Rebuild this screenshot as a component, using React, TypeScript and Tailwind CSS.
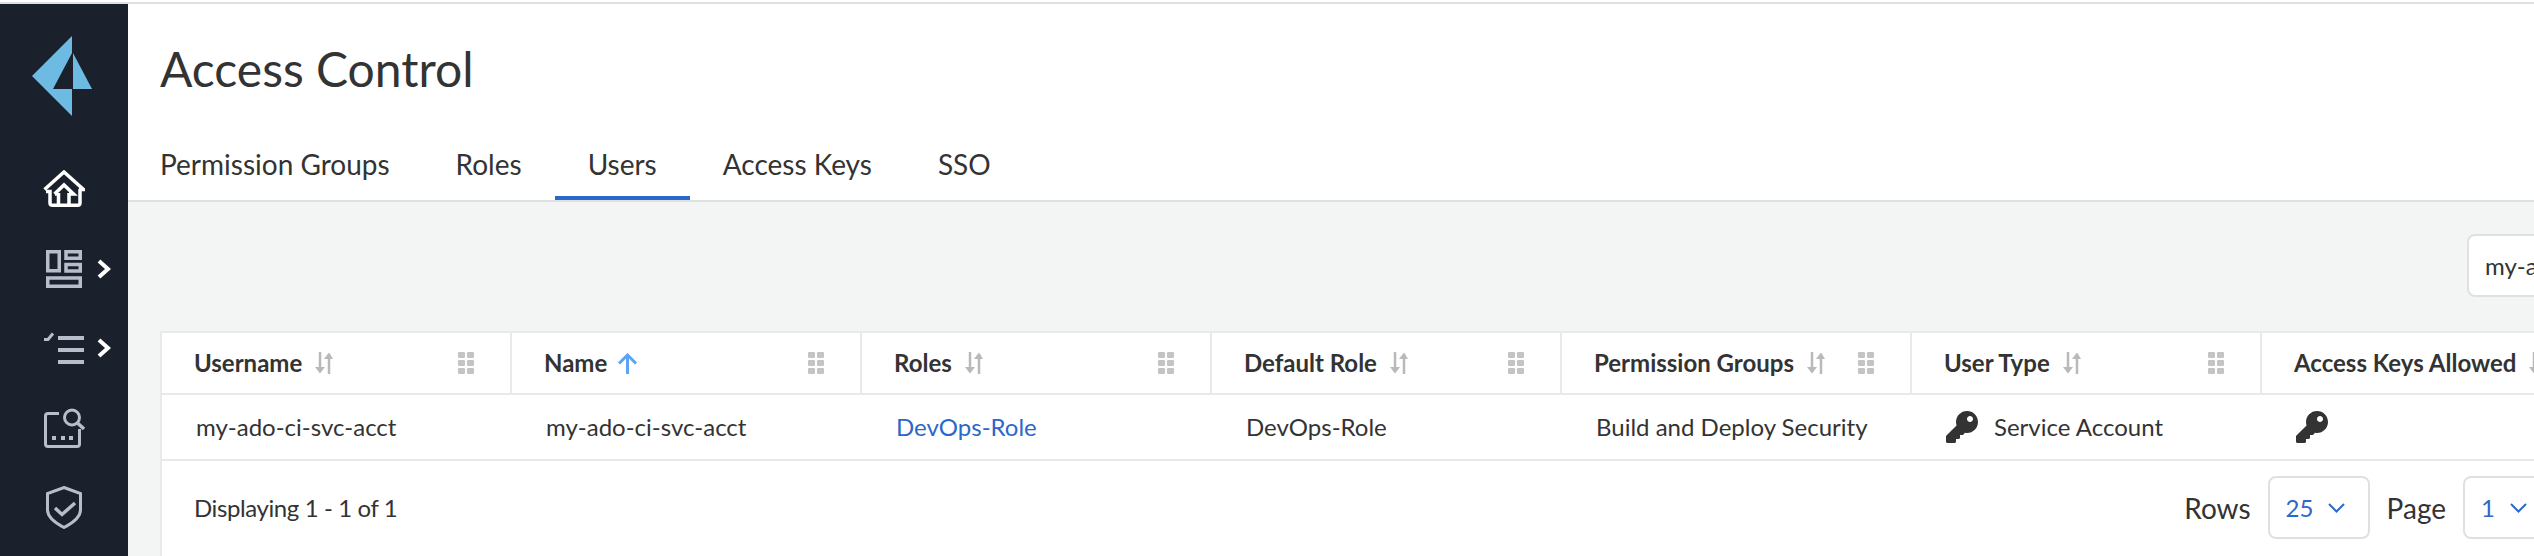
import React from "react";
import { FaKey } from "react-icons/fa";

const tabs = ["Permission Groups", "Roles", "Users", "Access Keys", "SSO"];

const columns = [
  { label: "Username", sort: "none" },
  { label: "Name", sort: "asc" },
  { label: "Roles", sort: "none" },
  { label: "Default Role", sort: "none" },
  { label: "Permission Groups", sort: "none" },
  { label: "User Type", sort: "none" },
  { label: "Access Keys Allowed", sort: "none" },
];

const Logo = () => (
  <svg width="60" height="80" viewBox="0 0 60 80" fill="#6dbbe3">
    <path d="M40 0 L0 40 L40 80 L40 53 L21 53 L40 17 Z" />
    <path d="M41 17 L60 53 L41 53 Z" />
  </svg>
);

const HomeIcon = () => (
  <svg width="42" height="37" viewBox="0 0 42 37" fill="none" stroke="#ffffff" strokeWidth="3.5">
    <path d="M1.5 19.5 L21 2 L40.5 19.5 H36" />
    <path d="M37 19 V33 Q37 35.25 34.5 35.25 H9.5 Q7 35.25 7 33 V21.5 H3" />
    <path d="M11.5 24 L21 15 L30.5 24 H26" />
    <path d="M15.5 23 V35 M26 23 V35" />
    <path d="M15 24 H12" />
  </svg>
);

const BoardIcon = () => (
  <svg width="36" height="38" viewBox="0 0 36 38" fill="none" stroke="#b7bdcb" strokeWidth="3.5">
    <rect x="1.75" y="1.75" width="11.5" height="19" />
    <rect x="20" y="1.75" width="14.25" height="6.5" />
    <rect x="20" y="14.5" width="14.25" height="6.5" />
    <rect x="1.75" y="28" width="32.5" height="8.25" />
  </svg>
);

const ListIcon = () => (
  <svg width="40" height="32" viewBox="0 0 40 32" fill="none" stroke="#b7bdcb" strokeWidth="4">
    <path d="M14 6 H40 M14 18 H40 M14 30 H40" />
    <path d="M0 7.5 H4 L9 1.5" strokeWidth="3" />
  </svg>
);

const SearchCardIcon = () => (
  <svg width="41" height="40" viewBox="0 0 41 40" fill="none" stroke="#b7bdcb" strokeWidth="3">
    <path d="M15 5.5 H4 Q1.5 5.5 1.5 8 V36 Q1.5 38.5 4 38.5 H33 Q35.5 38.5 35.5 36 V21" />
    <circle cx="28" cy="9.5" r="7.5" />
    <path d="M33.5 15 L40 21" strokeWidth="3.5" />
    <path d="M8 30 H12 M17 30 H21 M25 30 H29" strokeWidth="4" />
  </svg>
);

const ShieldIcon = () => (
  <svg width="36" height="43" viewBox="0 0 36 43" fill="none" stroke="#b7bdcb" strokeWidth="3">
    <path d="M18 1.5 L34.5 7.5 V24 Q34.5 33 18 41.5 Q1.5 33 1.5 24 V7.5 Z" />
    <path d="M9 22 L16 28.5 L29 17" strokeWidth="3.5" />
  </svg>
);

const NavChevron = () => (
  <svg width="14" height="20" viewBox="0 0 14 20" fill="none" stroke="#ffffff" strokeWidth="4">
    <path d="M2 2 L11 10 L2 18" />
  </svg>
);

const SortIcon = ({ active }: { active: boolean }) =>
  active ? (
    <svg width="21" height="21" viewBox="0 0 21 21" fill="none" stroke="#5ba4f5" strokeWidth="3">
      <path d="M10.5 21 V2 M2 10.5 L10.5 2 L19 10.5" />
    </svg>
  ) : (
    <svg className="ml-[3px]" width="18" height="22" viewBox="0 0 18 22" fill="none" stroke="#b9b9b9" strokeWidth="2.5">
      <path d="M5 0 V20" />
      <path d="M0 15 H10 L5 21.5 Z" fill="#b9b9b9" stroke="none" />
      <path d="M14 22 V2" />
      <path d="M9 7 H18 L14 0.5 Z" fill="#b9b9b9" stroke="none" />
    </svg>
  );

const DragDots = () => (
  <div className="grid grid-cols-2 gap-[2px]">
    {[0, 1, 2, 3, 4, 5].map((i) => (
      <span key={i} className="h-[6px] w-[7px] rounded-[1px] bg-[#c4c4c4]" />
    ))}
  </div>
);

const PageSelect = ({ value }: { value: string }) => (
  <div className="flex h-[63px] w-[102px] shrink-0 items-center gap-[15px] rounded-[8px] border-2 border-[#dfe1e1] bg-white pl-[16px] text-[24px] text-[#2a68c9]">
    <span>{value}</span>
    <svg width="17" height="10" viewBox="0 0 17 10" fill="none" stroke="#2a68c9" strokeWidth="2">
      <path d="M1 1 L8.5 8.5 L16 1" />
    </svg>
  </div>
);

export default function App() {
  return (
    <div className="h-[556px] w-[2534px] overflow-hidden bg-white pt-[2px] font-['Lato','Open_Sans',sans-serif] text-[#333333]">
      <div className="h-[2px] w-full bg-[#dfe1e1]" />
      <div className="flex h-[552px]">
        <nav className="flex w-[128px] shrink-0 flex-col bg-[#1a212d]">
          <div className="ml-[32px] mt-[32px]">
            <Logo />
          </div>
          <div className="ml-[43px] mt-[54px]">
            <HomeIcon />
          </div>
          <div className="ml-[46px] mt-[43px] flex h-[38px] items-center gap-[15px]">
            <BoardIcon />
            <NavChevron />
          </div>
          <div className="ml-[44px] mt-[44px] flex h-[32px] items-center gap-[13px]">
            <ListIcon />
            <NavChevron />
          </div>
          <div className="ml-[44px] mt-[44px]">
            <SearchCardIcon />
          </div>
          <div className="ml-[46px] mt-[38px]">
            <ShieldIcon />
          </div>
        </nav>

        <main className="min-w-0 flex-1 overflow-hidden bg-[#f3f5f5]">
          <header className="h-[198px] border-b-2 border-[#dfe1e1] bg-white pl-[32px]">
            <h1 className="pt-[35px] text-[48px] leading-[60px] text-[#333333]">Access Control</h1>
            <div className="mt-[44px] flex">
              {tabs.map((tab, i) => (
                <div
                  key={tab}
                  className={
                    tab === "Users"
                      ? "h-[57px] border-b-4 border-[#2a68c9] px-[33px] text-[28px] leading-[42px]"
                      : i === 0
                        ? "h-[57px] pr-[33px] text-[28px] leading-[42px]"
                        : "h-[57px] px-[33px] text-[28px] leading-[42px]"
                  }
                >
                  {tab}
                </div>
              ))}
            </div>
          </header>

          <div className="flex w-[2700px] justify-end pt-[32px]">
            <div className="flex h-[63px] w-[361px] items-center rounded-[8px] border-2 border-[#dfe1e1] bg-white pl-[16px] text-[24px]">
              my-ado-ci-svc-acct
            </div>
          </div>

          <div className="ml-[32px] mt-[34px] w-[2452px] border-l-2 border-t-2 border-[#e8eaea] bg-white">
            <div className="flex h-[62px] border-b-2 border-[#e8eaea]">
              {columns.map((col) => (
                <div key={col.label} className="flex w-[350px] shrink-0 items-center justify-between border-r-2 border-[#e8eaea] pl-[32px] pr-[36px]">
                  <div className="flex items-center gap-[10px] whitespace-nowrap text-[24px] font-bold">
                    {col.label}
                    <SortIcon active={col.sort === "asc"} />
                  </div>
                  <DragDots />
                </div>
              ))}
            </div>
            <div className="flex h-[66px] items-center border-b-2 border-[#e8eaea] text-[24px]">
              <div className="w-[350px] pl-[34px]">my-ado-ci-svc-acct</div>
              <div className="w-[350px] pl-[34px]">my-ado-ci-svc-acct</div>
              <div className="w-[350px] pl-[34px] text-[#2a68c9]">DevOps-Role</div>
              <div className="w-[350px] pl-[34px]">DevOps-Role</div>
              <div className="w-[350px] pl-[34px]">Build and Deploy Security</div>
              <div className="flex w-[350px] items-center gap-[16px] pl-[34px]">
                <FaKey size={32} color="#333333" />
                Service Account
              </div>
              <div className="w-[350px] pl-[34px]">
                <FaKey size={32} color="#333333" />
              </div>
            </div>
            <div className="flex h-[120px] items-start justify-between pr-[47px] pt-[15px]">
              <span className="pl-[32px] text-[24px] leading-[63px] tracking-[-0.4px]">Displaying 1 - 1 of 1</span>
              <div className="flex items-center gap-[17px] text-[28px]">
                <span>Rows</span>
                <PageSelect value="25" />
                <span>Page</span>
                <PageSelect value="1" />
              </div>
            </div>
          </div>
        </main>
      </div>
    </div>
  );
}
